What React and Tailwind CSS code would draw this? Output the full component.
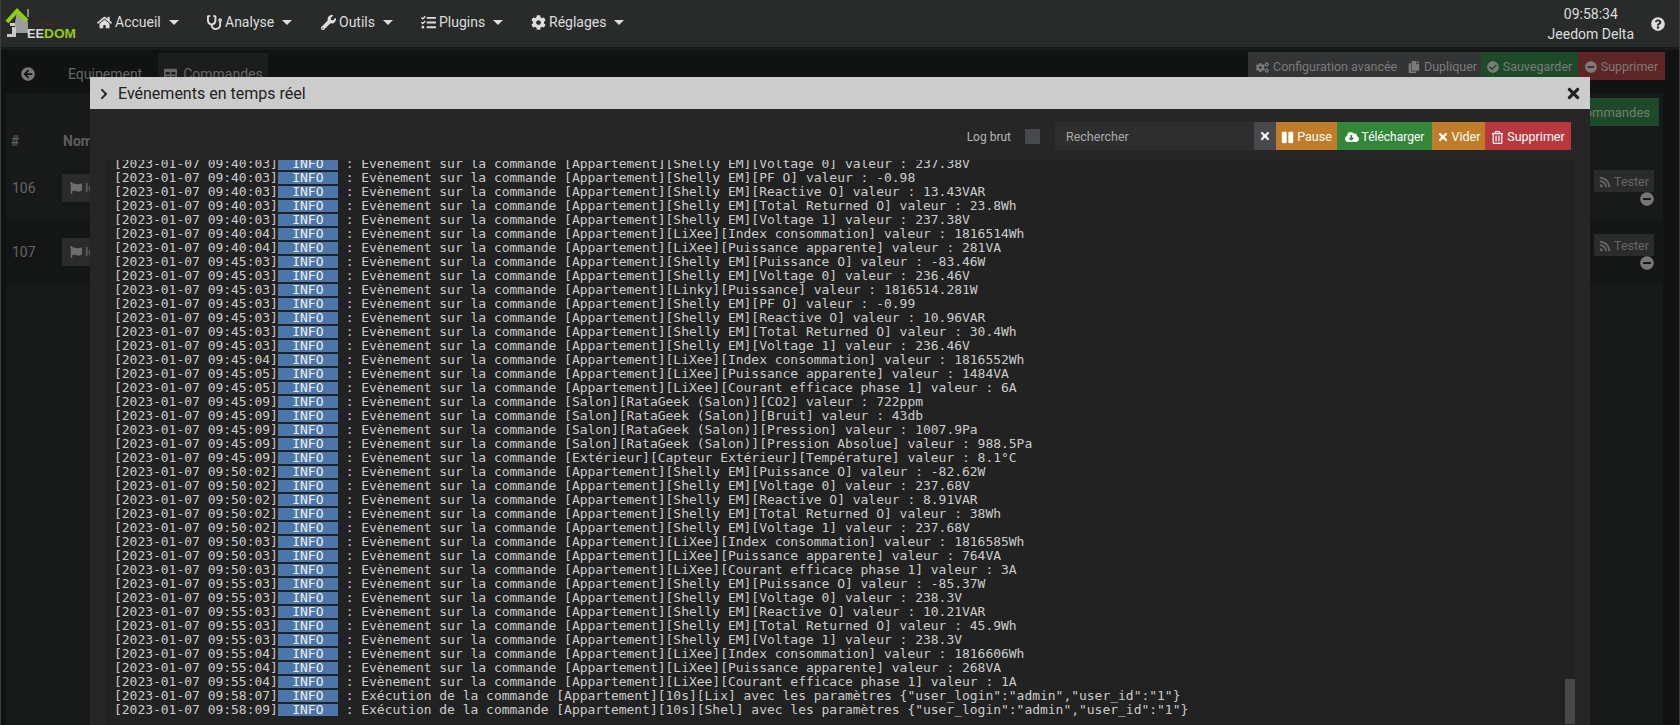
import {
  FaHome,
  FaStethoscope,
  FaWrench,
  FaTasks,
  FaCog,
  FaCogs,
  FaQuestionCircle,
  FaArrowCircleLeft,
  FaTable,
  FaFlag,
  FaCopy,
  FaCheckCircle,
  FaMinusCircle,
  FaChevronRight,
  FaTimes,
  FaPause,
  FaCloudDownloadAlt,
  FaRegTrashAlt,
  FaRss,
} from "react-icons/fa"

const B = "Appartement"
const V = "Evènement sur la commande"
const rows = [
  ["09:40:03", `[${B}][Shelly EM][Voltage 0] valeur : 237.38V`],
  ["09:40:03", `[${B}][Shelly EM][PF O] valeur : -0.98`],
  ["09:40:03", `[${B}][Shelly EM][Reactive O] valeur : 13.43VAR`],
  ["09:40:03", `[${B}][Shelly EM][Total Returned O] valeur : 23.8Wh`],
  ["09:40:03", `[${B}][Shelly EM][Voltage 1] valeur : 237.38V`],
  ["09:40:04", `[${B}][LiXee][Index consommation] valeur : 1816514Wh`],
  ["09:40:04", `[${B}][LiXee][Puissance apparente] valeur : 281VA`],
  ["09:45:03", `[${B}][Shelly EM][Puissance O] valeur : -83.46W`],
  ["09:45:03", `[${B}][Shelly EM][Voltage 0] valeur : 236.46V`],
  ["09:45:03", `[${B}][Linky][Puissance] valeur : 1816514.281W`],
  ["09:45:03", `[${B}][Shelly EM][PF O] valeur : -0.99`],
  ["09:45:03", `[${B}][Shelly EM][Reactive O] valeur : 10.96VAR`],
  ["09:45:03", `[${B}][Shelly EM][Total Returned O] valeur : 30.4Wh`],
  ["09:45:03", `[${B}][Shelly EM][Voltage 1] valeur : 236.46V`],
  ["09:45:04", `[${B}][LiXee][Index consommation] valeur : 1816552Wh`],
  ["09:45:05", `[${B}][LiXee][Puissance apparente] valeur : 1484VA`],
  ["09:45:05", `[${B}][LiXee][Courant efficace phase 1] valeur : 6A`],
  ["09:45:09", `[Salon][RataGeek (Salon)][CO2] valeur : 722ppm`],
  ["09:45:09", `[Salon][RataGeek (Salon)][Bruit] valeur : 43db`],
  ["09:45:09", `[Salon][RataGeek (Salon)][Pression] valeur : 1007.9Pa`],
  ["09:45:09", `[Salon][RataGeek (Salon)][Pression Absolue] valeur : 988.5Pa`],
  ["09:45:09", `[Extérieur][Capteur Extérieur][Température] valeur : 8.1°C`],
  ["09:50:02", `[${B}][Shelly EM][Puissance O] valeur : -82.62W`],
  ["09:50:02", `[${B}][Shelly EM][Voltage 0] valeur : 237.68V`],
  ["09:50:02", `[${B}][Shelly EM][Reactive O] valeur : 8.91VAR`],
  ["09:50:02", `[${B}][Shelly EM][Total Returned O] valeur : 38Wh`],
  ["09:50:02", `[${B}][Shelly EM][Voltage 1] valeur : 237.68V`],
  ["09:50:03", `[${B}][LiXee][Index consommation] valeur : 1816585Wh`],
  ["09:50:03", `[${B}][LiXee][Puissance apparente] valeur : 764VA`],
  ["09:50:03", `[${B}][LiXee][Courant efficace phase 1] valeur : 3A`],
  ["09:55:03", `[${B}][Shelly EM][Puissance O] valeur : -85.37W`],
  ["09:55:03", `[${B}][Shelly EM][Voltage 0] valeur : 238.3V`],
  ["09:55:03", `[${B}][Shelly EM][Reactive O] valeur : 10.21VAR`],
  ["09:55:03", `[${B}][Shelly EM][Total Returned O] valeur : 45.9Wh`],
  ["09:55:03", `[${B}][Shelly EM][Voltage 1] valeur : 238.3V`],
  ["09:55:04", `[${B}][LiXee][Index consommation] valeur : 1816606Wh`],
  ["09:55:04", `[${B}][LiXee][Puissance apparente] valeur : 268VA`],
  ["09:55:04", `[${B}][LiXee][Courant efficace phase 1] valeur : 1A`],
]

const nav = [
  { name: "Accueil", icon: FaHome, w: "w-[110px]" },
  { name: "Analyse", icon: FaStethoscope, w: "w-[114px]" },
  { name: "Outils", icon: FaWrench, w: "w-[100px]" },
  { name: "Plugins", icon: FaTasks, w: "w-[110px]" },
  { name: "Réglages", icon: FaCog, w: "w-[110px]" },
]

function Caret() {
  return <span className="ml-[5px] h-0 w-0 border-x-[5px] border-t-[5px] border-x-transparent border-t-[#dddddd]" />
}

function Logo() {
  return (
    <svg width="80" height="40" viewBox="0 0 80 40" className="shrink-0">
      <rect x="27" y="5" width="2" height="8" fill="#8a8a8a" />
      <path d="M17 7 L28 18 L28 29 L15 29 L15 18 Z" fill="#9c9c9c" />
      <path d="M7 18 L17 7 L27 17" fill="none" stroke="#8fd010" strokeWidth="4" />
      <rect x="10" y="19" width="5" height="3" fill="#d0d0d0" />
      <path d="M11 23 h5 v10 h-9 v-3 h5 v-7 Z" fill="#c8c8c8" />
      <path d="M33 21 q6 -3 12 -1 t14 0" fill="none" stroke="#6a1c1c" strokeWidth="0.8" />
      <text x="27" y="34" textLength="17" lengthAdjust="spacingAndGlyphs" fontFamily="'Liberation Sans', sans-serif" fontWeight="700" fontSize="12.5" fill="#d8d8d8">EE</text>
      <text x="44" y="34" textLength="32" lengthAdjust="spacingAndGlyphs" fontFamily="'Liberation Sans', sans-serif" fontWeight="700" fontSize="12.5" fill="#94c912">DOM</text>
    </svg>
  )
}

function LogRow({ time, text, verb }) {
  return (
    <div className="flex h-[14px] items-center whitespace-pre leading-[14px]">
      <span>[2023-01-07 {time}]</span>
      <span className="flex h-[12px] w-[60px] shrink-0 items-center justify-center bg-[#4c76aa] text-[#eeeeee]">INFO</span>
      <span>{` : ${verb} ${text}`}</span>
    </div>
  )
}

function ModalButton({ icon: Icon, label, color, width, size, text = "text-[12.5px]" }) {
  return (
    <span className={`flex h-[28px] items-center justify-center gap-[3px] pt-[2px] text-white ${text} ${color} ${width}`}>
      <Icon size={size} />
      {label}
    </span>
  )
}

function EqRow({ id, bg }) {
  return (
    <div className={`flex h-[64px] shrink-0 items-start pl-[6px] ${bg}`}>
      <span className="mt-[18px] w-[50px] text-[14px] leading-[28px]">{id}</span>
      <span className="mt-[18px] flex h-[28px] w-[100px] items-center gap-[3px] bg-[#2a2b2c] pl-[8px] text-[12.5px] text-[#6c6c6c]">
        <FaFlag size={12} />Icône
      </span>
      <div className="ml-auto flex w-[70px] flex-col items-end pr-[9px] text-[#666666]">
        <span className="mt-[14px] flex h-[22px] w-[60px] items-center justify-center gap-[3px] bg-[#2a2b2c] pt-[2px] text-[12.5px]">
          <FaRss size={12} />Tester
        </span>
        <FaMinusCircle size={14} className="text-[#777777]" />
      </div>
    </div>
  )
}

function Background() {
  return (
    <div className="flex h-[678px] flex-col border-t-[3px] border-t-[#1a1b1b] bg-[#111313] text-[#666666]">
      <div className="flex h-[43px] shrink-0 items-start justify-between pl-[21px] pt-[2px]">
        <div className="flex h-[42px] items-center pt-[2px] text-[14px]">
          <FaArrowCircleLeft size={14} className="mr-[33px] text-[#777777]" />
          <span className="mr-[16px]">Equipement</span>
          <span className="flex h-[42px] w-[110px] items-center gap-[6px] bg-[#1c1e1e] pl-[6px]"><FaTable size={13} />Commandes</span>
        </div>
        <div className="mr-[15px] flex h-[28px] items-center whitespace-nowrap text-[12.5px] text-[#7b7b7b]">
          <span className="flex h-full w-[158px] items-center gap-[4px] bg-[#333436] pl-[8px] pt-[2px]"><FaCogs size={13} />Configuration avancée</span>
          <span className="flex h-full w-[75px] items-center gap-[4px] bg-[#333436] pl-[2px] pt-[2px]"><FaCopy size={12} />Dupliquer</span>
          <span className="flex h-full w-[97px] items-center justify-center gap-[4px] bg-[#1f4a2a] pt-[2px]"><FaCheckCircle size={12} />Sauvegarder</span>
          <span className="flex h-full w-[87px] items-center justify-center gap-[4px] bg-[#5e2527] pt-[2px]"><FaMinusCircle size={12} />Supprimer</span>
        </div>
      </div>
      <div className="ml-[6px] mr-[17px] flex min-h-0 flex-1 flex-col bg-[#181a19] text-[14px]">
        <div className="flex h-[63px] shrink-0 items-start justify-between pl-[5px] pr-[4px]">
          <div className="mt-[38px] flex font-bold text-[#5e5e5e]">
            <span className="w-[52px]">#</span>
            <span>Nom</span>
          </div>
          <span className="mt-[5px] flex h-[28px] w-[120px] items-center justify-end bg-[#1f4a2a] pr-[9px] pt-[2px] text-[13px] text-[#6f806f]">Commandes</span>
        </div>
        <EqRow id="106" bg="bg-[#181a19]" />
        <EqRow id="107" bg="bg-[#141616]" />
      </div>
    </div>
  )
}

export default function App() {
  return (
    <div className="relative h-[725px] w-[1680px] overflow-hidden bg-[#111313] font-['Roboto',sans-serif]">
      <header className="flex h-[47px] items-center justify-between bg-[#292b2b] text-[14px] text-[#dddddd]">
        <div className="flex h-full items-center">
          <Logo />
          <nav className="ml-[17px] flex items-center pb-[2px]">
            {nav.map((item) => {
              const Icon = item.icon
              return (
                <span key={item.name} className={`flex items-center gap-[3px] ${item.w}`}>
                  <Icon size={15} />
                  {item.name}
                  <Caret />
                </span>
              )
            })}
          </nav>
        </div>
        <div className="flex items-center gap-[17px] pr-[15px]">
          <div className="text-center text-[14px] leading-[20px]">
            <div>09:58:34</div>
            <div>Jeedom Delta</div>
          </div>
          <FaQuestionCircle size={14} />
        </div>
      </header>

      <Background />

      <span className="absolute inset-y-0 left-0 w-px bg-[#3c3c3c]" />
      <span className="absolute inset-y-0 right-0 w-px bg-[#3c3c3c]" />

      <div className="absolute left-[90px] top-[77px] flex h-[648px] w-[1500px] flex-col overflow-hidden bg-[#262626]">
        <div className="flex h-[32px] shrink-0 items-center justify-between bg-[#cccccc] pl-[8px] pr-[8px] text-[#222222]">
          <div className="flex items-center gap-[8px] pt-px text-[16px]">
            <FaChevronRight size={12} />
            Evénements en temps réel
          </div>
          <FaTimes size={17} />
        </div>
        <div className="flex h-[51px] shrink-0 items-start justify-end pr-[19px] pt-[13px]">
          <span className="mr-[14px] mt-[6px] text-[12px] text-[#b5b5b5]">Log brut</span>
          <span className="mr-[15px] mt-[7px] h-[15px] w-[15px] bg-[#47494c]" />
          <span className="flex h-[28px] w-[199px] items-center bg-[#2e2e2e] pl-[11px] pt-[2px] text-[12.5px] text-[#aaaaaa]">Rechercher</span>
          <span className="flex h-[28px] w-[22px] items-center justify-center bg-[#47494c] text-white"><FaTimes size={12} /></span>
          <ModalButton icon={FaPause} size={13} label="Pause" color="bg-[#c07c28]" width="w-[61px]" />
          <ModalButton icon={FaCloudDownloadAlt} size={14} label="Télécharger" text="text-[12px]" color="bg-[#348638]" width="w-[95px]" />
          <ModalButton icon={FaTimes} size={12} label="Vider" color="bg-[#c07c28]" width="w-[53px]" />
          <ModalButton icon={FaRegTrashAlt} size={13} label="Supprimer" color="bg-[#b8383e]" width="w-[86px]" />
        </div>
        <div className="relative mx-[15px] min-h-0 flex-1 overflow-hidden bg-[#222222] pl-[9px] font-['DejaVu_Sans_Mono',monospace] text-[13px] tracking-[-0.025px] text-[#cccccc]">
          <div className="mt-[-3px]">
            {rows.map(([time, text], i) => (
              <LogRow key={i} time={time} text={text} verb={V} />
            ))}
            <LogRow time="09:58:07" verb="Exécution de la commande" text={`[${B}][10s][Lix] avec les paramètres {"user_login":"admin","user_id":"1"}`} />
            <LogRow time="09:58:09" verb="Exécution de la commande" text={`[${B}][10s][Shel] avec les paramètres {"user_login":"admin","user_id":"1"}`} />
          </div>
          <div className="absolute right-0 top-[519px] h-[45px] w-[10px] bg-[#474848]" />
        </div>
      </div>
    </div>
  )
}
